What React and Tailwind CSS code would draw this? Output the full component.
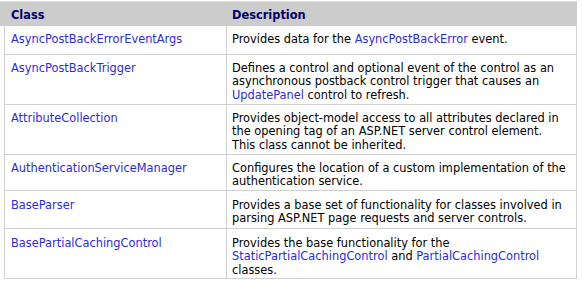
import React from 'react';

const L = ({ children }) => <span className="text-[#2a2ae6]">{children}</span>;

const rows = [
  {
    name: 'AsyncPostBackErrorEventArgs',
    h: 'h-[29px]',
    pt: 'pt-[7px]',
    desc: (
      <>
        Provides data for the <L>AsyncPostBackError</L> event.
      </>
    ),
  },
  {
    name: 'AsyncPostBackTrigger',
    h: 'h-[50px]',
    pt: 'pt-[7px]',
    desc: (
      <>
        Defines a control and optional event of the control as an
        <br />
        asynchronous postback control trigger that causes an
        <br />
        <L>UpdatePanel</L> control to refresh.
      </>
    ),
  },
  {
    name: 'AttributeCollection',
    h: 'h-[50px]',
    pt: 'pt-[7px]',
    desc: (
      <>
        Provides object-model access to all attributes declared in
        <br />
        the opening tag of an ASP.NET server control element.
        <br />
        This class cannot be inherited.
      </>
    ),
  },
  {
    name: 'AuthenticationServiceManager',
    h: 'h-[36px]',
    pt: 'pt-[7px]',
    desc: (
      <>
        Configures the location of a custom implementation of the
        <br />
        authentication service.
      </>
    ),
  },
  {
    name: 'BaseParser',
    h: 'h-[38px]',
    pt: 'pt-[8px]',
    desc: (
      <>
        Provides a base set of functionality for classes involved in
        <br />
        parsing ASP.NET page requests and server controls.
      </>
    ),
  },
  {
    name: 'BasePartialCachingControl',
    h: 'h-[50px]',
    pt: 'pt-[8px]',
    desc: (
      <>
        Provides the base functionality for the
        <br />
        <L>StaticPartialCachingControl</L> and <L>PartialCachingControl</L>
        <br />
        classes.
      </>
    ),
  },
];

export default function App() {
  return (
    <div className="w-[583px] h-[281px] bg-white pt-px text-[11.4px] leading-[13.33px] text-black font-['DejaVu_Sans',Verdana,sans-serif] overflow-hidden">
      {/* header */}
      <div className="w-[577px] h-[25px] border-t border-[#dedede] bg-[#cccccc] flex font-bold text-[#000066] pt-[7px]">
        <div className="w-[227px] pl-[11px]">Class</div>
        <div className="flex-1 pl-[5px]">Description</div>
      </div>

      {/* body */}
      <div className="ml-[4px] w-[573px] border-l border-r border-[#d0d0d0]">
        {rows.map((r) => (
          <div key={r.name} className={`flex border-b border-[#d0d0d0] ${r.h}`}>
            <div className={`w-[222px] border-r border-[#d0d0d0] pl-[6px] whitespace-nowrap ${r.pt}`}>
              <L>{r.name}</L>
            </div>
            <div className={`flex-1 pl-[5px] whitespace-nowrap ${r.pt}`}>{r.desc}</div>
          </div>
        ))}
      </div>
    </div>
  );
}
